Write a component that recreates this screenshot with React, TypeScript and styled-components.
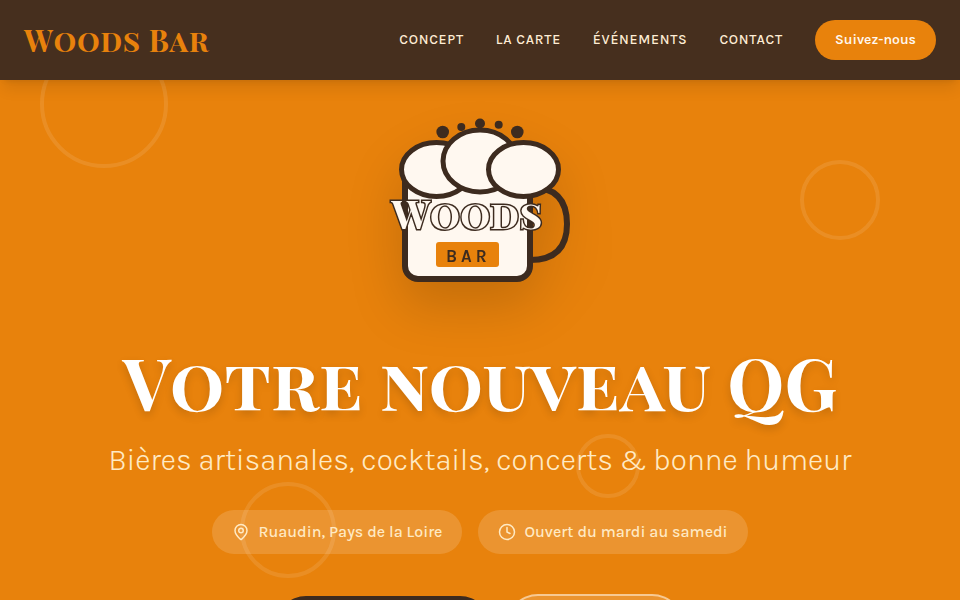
import React from "react";
import styled, { createGlobalStyle } from "styled-components";
import { Clock, MapPin } from "lucide-react";

const color = {
  orange: "#e8820c",
  brown: "#462f1e",
  ink: "#3d2b1f",
  foam: "#fff8f0",
  cream: "#ffedd5",
  sand: "#ffeac4",
};

const serif = `"Playfair Display SC", "Liberation Serif", serif`;
const sans = `Karla, Inter, "Liberation Sans", sans-serif`;

const GlobalStyle = createGlobalStyle`
  * { box-sizing: border-box; }
  html, body { margin: 0; overflow: hidden; }
  body {
    background: ${color.orange};
    color: ${color.cream};
    font-family: ${sans};
  }
`;

const Page = styled.div`
  height: 100vh;
  display: flex;
  flex-direction: column;
  overflow: hidden;
`;

const Header = styled.header`
  position: relative;
  z-index: 2;
  flex: none;
  display: flex;
  align-items: center;
  justify-content: space-between;
  padding: 20px 24px;
  background: ${color.brown};
  box-shadow: 0 10px 15px -3px rgba(0, 0, 0, 0.1), 0 4px 6px -4px rgba(0, 0, 0, 0.1);
`;

const Brand = styled.a`
  font-family: ${serif};
  font-size: 30px;
  line-height: 40px;
  font-weight: 700;
  letter-spacing: 0.025em;
  color: ${color.orange};
  text-decoration: none;
  white-space: nowrap;
`;

const Nav = styled.nav`
  display: flex;
  align-items: center;
  gap: 32px;
`;

const NavLink = styled.a`
  font-size: 14px;
  line-height: 20px;
  font-weight: 500;
  letter-spacing: 0.05em;
  text-transform: uppercase;
  text-decoration: none;
  white-space: nowrap;
  color: ${color.cream};
`;

const FollowButton = styled.button`
  padding: 10px 20px;
  border: 0;
  border-radius: 20px;
  background: ${color.orange};
  color: ${color.foam};
  font-family: ${sans};
  font-size: 14px;
  line-height: 20px;
  font-weight: 600;
`;

const Hero = styled.main`
  position: relative;
  flex: 1;
  display: flex;
  flex-direction: column;
  align-items: center;
  padding: 20px 16px 0;
  text-align: center;
`;

const Bubble = styled.span<{ $size: number; $left: string; $top: number }>`
  position: absolute;
  left: ${(p) => p.$left};
  top: ${(p) => p.$top}px;
  width: ${(p) => p.$size}px;
  height: ${(p) => p.$size}px;
  border: 4px solid rgba(255, 255, 255, 0.1);
  border-radius: 50%;
`;

const Logo = styled.svg`
  position: relative;
  flex: none;
  width: 200px;
  height: 200px;
  overflow: visible;
  filter: drop-shadow(0 25px 25px rgba(0, 0, 0, 0.15));
`;

const Title = styled.h1`
  position: relative;
  margin: 45px 0 0;
  font-family: ${serif};
  font-size: 72px;
  line-height: 72px;
  font-weight: 700;
  color: #fff;
  white-space: nowrap;
  text-shadow: 0 4px 8px rgba(0, 0, 0, 0.15);
`;

const Subtitle = styled.p`
  position: relative;
  margin: 23px 0 0;
  font-size: 30px;
  line-height: 40px;
  font-weight: 300;
  color: ${color.sand};
  white-space: nowrap;
`;

const Row = styled.div<{ $top: number }>`
  position: relative;
  display: flex;
  justify-content: center;
  align-items: center;
  gap: 16px;
  margin-top: ${(p) => p.$top}px;
`;

const Pill = styled.span`
  display: inline-flex;
  align-items: center;
  gap: 8px;
  padding: 10px 20px;
  border-radius: 22px;
  background: rgba(255, 255, 255, 0.15);
  font-size: 16px;
  line-height: 24px;
  font-weight: 500;
  color: ${color.sand};
  white-space: nowrap;
`;

const Action = styled.a<{ $outlined?: boolean }>`
  width: ${(p) => (p.$outlined ? 178 : 214)}px;
  height: ${(p) => (p.$outlined ? 64 : 60)}px;
  border: ${(p) => (p.$outlined ? "2px solid rgba(255, 237, 213, 0.6)" : "0")};
  border-radius: 32px;
  background: ${(p) => (p.$outlined ? "rgba(255, 255, 255, 0.15)" : color.ink)};
`;

function BeerLogo() {
  return (
    <Logo viewBox="0 0 200 200" role="img" aria-label="Woods Bar">
      <g stroke={color.ink} strokeLinecap="round">
        <path d="M150 87 Q187 87 187 124 Q187 160 150 160" fill="none" strokeWidth="6" />
        <rect x="25" y="66" width="125" height="113" rx="13" fill={color.foam} strokeWidth="6" />
        <g fill={color.foam} strokeWidth="5">
          <ellipse cx="56.5" cy="69.5" rx="35" ry="27" />
          <ellipse cx="100" cy="61" rx="37" ry="31" />
          <ellipse cx="143.5" cy="69.5" rx="35" ry="27" />
        </g>
      </g>
      <g fill={color.ink}>
        <circle cx="62.7" cy="32" r="6.3" />
        <circle cx="81.3" cy="27" r="4" />
        <circle cx="100" cy="23.5" r="5" />
        <circle cx="118.7" cy="24.7" r="4" />
        <circle cx="137.3" cy="32" r="6.3" />
      </g>
      <text
        x="87"
        y="129"
        textAnchor="middle"
        fontFamily={serif}
        fontWeight="700"
        fontSize="40"
        fill={color.foam}
        stroke={color.ink}
        strokeWidth="3"
        paintOrder="stroke"
      >
        Woods
      </text>
      <rect x="56" y="142" width="63" height="25" rx="3" fill={color.orange} />
      <text
        x="66"
        y="162"
        fontFamily={sans}
        fontWeight="700"
        fontSize="17"
        letterSpacing="4"
        fill={color.ink}
      >
        BAR
      </text>
    </Logo>
  );
}

export default function App() {
  return (
    <Page>
      <GlobalStyle />
      <Header>
        <Brand href="#accueil">Woods Bar</Brand>
        <Nav>
          <NavLink href="#concept">Concept</NavLink>
          <NavLink href="#carte">La carte</NavLink>
          <NavLink href="#evenements">Événements</NavLink>
          <NavLink href="#contact">Contact</NavLink>
          <FollowButton type="button">Suivez-nous</FollowButton>
        </Nav>
      </Header>
      <Hero>
        <Bubble $size={128} $left="40px" $top={-40} />
        <Bubble $size={80} $left="calc(100% - 160px)" $top={80} />
        <Bubble $size={96} $left="25%" $top={402} />
        <Bubble $size={64} $left="60%" $top={354} />
        <BeerLogo />
        <Title>Votre nouveau QG</Title>
        <Subtitle>Bières artisanales, cocktails, concerts &amp; bonne humeur</Subtitle>
        <Row $top={30}>
          <Pill>
            <MapPin size={18} />
            Ruaudin, Pays de la Loire
          </Pill>
          <Pill>
            <Clock size={18} />
            Ouvert du mardi au samedi
          </Pill>
        </Row>
        <Row $top={40}>
          <Action href="#carte" aria-label="La carte" />
          <Action href="#contact" aria-label="Contact" $outlined />
        </Row>
      </Hero>
    </Page>
  );
}
